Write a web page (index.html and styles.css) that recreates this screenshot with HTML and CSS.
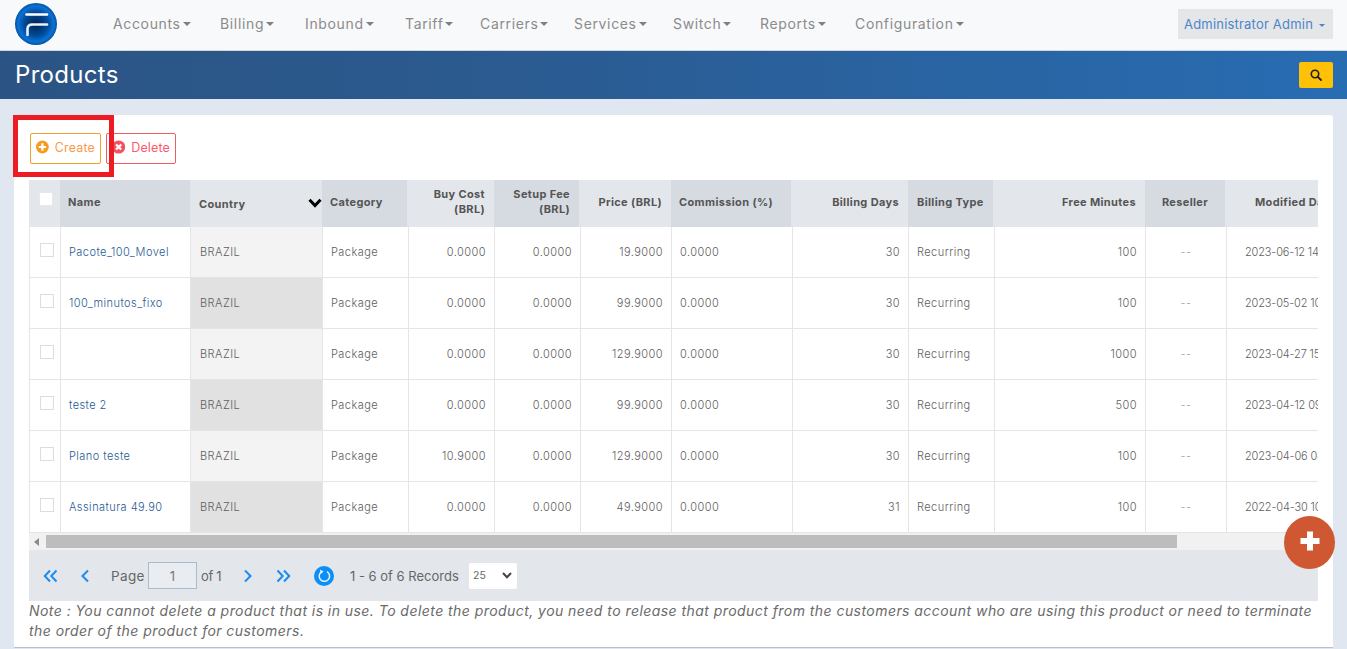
FILE: index.html
```
<!DOCTYPE html>
<html lang="en">
<head>
<meta charset="utf-8">
<title>Products</title>
<link rel="stylesheet" href="styles.css">
</head>
<body>
<header class="topbar">
  <a class="logo" href="#" aria-label="Home">
    <svg width="42" height="42" viewBox="0 0 42 42">
      <defs>
        <radialGradient id="lg" cx="50%" cy="50%" r="50%">
          <stop offset="0" stop-color="#00224f"/>
          <stop offset=".55" stop-color="#014a96"/>
          <stop offset=".85" stop-color="#0a72d6"/>
          <stop offset="1" stop-color="#02529f"/>
        </radialGradient>
      </defs>
      <circle cx="21" cy="21" r="21" fill="url(#lg)"/>
      <path d="M11.500 11.500H32" stroke="#fff" stroke-width="2.600" fill="none" stroke-linecap="round"/>
      <path d="M12.500 32V26C12.500 23 14.500 21.500 17.500 21.500H32" stroke="#e8f0f8" stroke-width="2.600" fill="none" stroke-linecap="round"/>
    </svg>
  </a>
  <nav class="mainnav">
    <a class="navitem" href="#">Accounts</a>
    <a class="navitem" href="#">Billing</a>
    <a class="navitem" href="#">Inbound</a>
    <a class="navitem" href="#">Tariff</a>
    <a class="navitem" href="#">Carriers</a>
    <a class="navitem" href="#">Services</a>
    <a class="navitem" href="#">Switch</a>
    <a class="navitem" href="#">Reports</a>
    <a class="navitem" href="#">Configuration</a>
  </nav>
  <button class="userbtn" type="button">Administrator Admin</button>
</header>

<section class="titlebar">
  <h1 class="pagetitle">Products</h1>
  <button class="searchbtn" type="button" aria-label="Search">
    <svg width="12" height="12" viewBox="0 0 12 12"><circle cx="5" cy="5" r="3.700" fill="none" stroke="#1c1c1c" stroke-width="1.600"/><path d="M7.800 7.800L11 11" stroke="#1c1c1c" stroke-width="1.800" stroke-linecap="round"/></svg>
  </button>
</section>

<main class="card">
  <div class="toolbar">
    <button class="actbtn create" type="button">
      <svg class="acticon" width="14" height="14" viewBox="0 0 14 14"><circle cx="7" cy="7" r="7" fill="#f39c1f"/><path d="M7 3V11M3 7H11" stroke="#fff" stroke-width="2.400"/></svg>Create
    </button>
    <button class="actbtn delete" type="button">
      <svg class="acticon" width="14" height="14" viewBox="0 0 14 14"><circle cx="7" cy="7" r="7" fill="#f4505f"/><path d="M4.300 4.300L9.700 9.700M9.700 4.300L4.300 9.700" stroke="#fff" stroke-width="2.400"/></svg>Delete
    </button>
    <div class="highlight"></div>
  </div>

  <div class="gridwrap">
    <div class="ghead">
      <div class="th"><span class="cb cb-head"></span></div>
      <div class="th dark">Name</div>
      <div class="th country">Country
        <svg class="sortarrow" width="14" height="10" viewBox="0 0 14 10"><path d="M1.500 1.800L7 7.500L12.500 1.800" fill="none" stroke="#000" stroke-width="3"/></svg>
      </div>
      <div class="th dark">Category</div>
      <div class="th right">Buy Cost<br>(BRL)</div>
      <div class="th dark right">Setup Fee<br>(BRL)</div>
      <div class="th right">Price (BRL)</div>
      <div class="th dark">Commission (%)</div>
      <div class="th right">Billing Days</div>
      <div class="th dark btype">Billing Type</div>
      <div class="th right">Free Minutes</div>
      <div class="th dark center">Reseller</div>
      <div class="th modified">Modified Date</div>
    </div>

    <div class="grow">
      <div class="td"><span class="cb"></span></div><div class="td"><a class="plink" href="#">Pacote_100_Movel</a></div><div class="td cty">BRAZIL</div><div class="td">Package</div><div class="td right">0.0000</div><div class="td right">0.0000</div><div class="td right">19.9000</div><div class="td">0.0000</div><div class="td right">30</div><div class="td">Recurring</div><div class="td right">100</div><div class="td center muted">--</div><div class="td date">2023-06-12 14:21:05</div>
    </div>
    <div class="grow">
      <div class="td"><span class="cb"></span></div><div class="td"><a class="plink" href="#">100_minutos_fixo</a></div><div class="td cty alt">BRAZIL</div><div class="td">Package</div><div class="td right">0.0000</div><div class="td right">0.0000</div><div class="td right">99.9000</div><div class="td">0.0000</div><div class="td right">30</div><div class="td">Recurring</div><div class="td right">100</div><div class="td center muted">--</div><div class="td date">2023-05-02 10:12:44</div>
    </div>
    <div class="grow">
      <div class="td"><span class="cb"></span></div><div class="td"></div><div class="td cty">BRAZIL</div><div class="td">Package</div><div class="td right">0.0000</div><div class="td right">0.0000</div><div class="td right">129.9000</div><div class="td">0.0000</div><div class="td right">30</div><div class="td">Recurring</div><div class="td right">1000</div><div class="td center muted">--</div><div class="td date">2023-04-27 15:33:18</div>
    </div>
    <div class="grow">
      <div class="td"><span class="cb"></span></div><div class="td"><a class="plink" href="#">teste 2</a></div><div class="td cty alt">BRAZIL</div><div class="td">Package</div><div class="td right">0.0000</div><div class="td right">0.0000</div><div class="td right">99.9000</div><div class="td">0.0000</div><div class="td right">30</div><div class="td">Recurring</div><div class="td right">500</div><div class="td center muted">--</div><div class="td date">2023-04-12 09:47:52</div>
    </div>
    <div class="grow">
      <div class="td"><span class="cb"></span></div><div class="td"><a class="plink" href="#">Plano teste</a></div><div class="td cty">BRAZIL</div><div class="td">Package</div><div class="td right">10.9000</div><div class="td right">0.0000</div><div class="td right">129.9000</div><div class="td">0.0000</div><div class="td right">30</div><div class="td">Recurring</div><div class="td right">100</div><div class="td center muted">--</div><div class="td date">2023-04-06 08:05:29</div>
    </div>
    <div class="grow">
      <div class="td"><span class="cb"></span></div><div class="td"><a class="plink" href="#">Assinatura 49.90</a></div><div class="td cty alt">BRAZIL</div><div class="td">Package</div><div class="td right">0.0000</div><div class="td right">0.0000</div><div class="td right">49.9000</div><div class="td">0.0000</div><div class="td right">31</div><div class="td">Recurring</div><div class="td right">100</div><div class="td center muted">--</div><div class="td date">2022-04-30 10:16:37</div>
    </div>

    <div class="hscroll">
      <span class="scrollarrow"></span>
      <span class="scrollthumb"></span>
    </div>
  </div>

  <div class="pager">
    <svg class="pg pg-first" width="15" height="14" viewBox="0 0 15 14"><path d="M7 1.500L1.800 7L7 12.500M13.500 1.500L8.300 7L13.500 12.500" fill="none" stroke="#1a8cf0" stroke-width="2"/></svg>
    <svg class="pg pg-prev" width="10" height="14" viewBox="0 0 10 14"><path d="M8 1.500L2.500 7L8 12.500" fill="none" stroke="#1a8cf0" stroke-width="2"/></svg>
    <span class="pgtext pg-page">Page</span>
    <input class="pginput" type="text" value="1" aria-label="Page">
    <span class="pgtext pg-of">of 1</span>
    <svg class="pg pg-next" width="10" height="14" viewBox="0 0 10 14"><path d="M2 1.500L7.500 7L2 12.500" fill="none" stroke="#1a8cf0" stroke-width="2"/></svg>
    <svg class="pg pg-last" width="15" height="14" viewBox="0 0 15 14"><path d="M1.500 1.500L6.700 7L1.500 12.500M8 1.500L13.200 7L8 12.500" fill="none" stroke="#1a8cf0" stroke-width="2"/></svg>
    <svg class="pg pg-refresh" width="20" height="20" viewBox="0 0 20 20"><circle cx="10" cy="10" r="10" fill="#0b8ef5"/><path d="M7.500 5.800A5.200 5.200 0 1 0 13 5.600" fill="none" stroke="#e4f3ff" stroke-width="1.500"/><path d="M6 3.500L9.600 5.400L6.700 8Z" fill="#e4f3ff"/></svg>
    <span class="pgtext pg-records">1 - 6 of 6 Records</span>
    <div class="pgselect">25
      <svg width="10" height="7" viewBox="0 0 10 7"><path d="M1 1L5 5.300L9 1" fill="none" stroke="#444" stroke-width="2"/></svg>
    </div>
  </div>

  <p class="note">Note : You cannot delete a product that is in use. To delete the product, you need to release that product from the customers account who are using this product or need to terminate<br>the order of the product for customers.</p>
</main>

<button class="fab" type="button" aria-label="Add">
  <svg width="20" height="20" viewBox="0 0 20 20"><path d="M10 .500V19.500M.500 10H19.500" stroke="#fff" stroke-width="6"/></svg>
</button>
</body>
</html>
```
FILE: styles.css
```
* { box-sizing: border-box; }
html, body { height: 649px; overflow: hidden; }
body {
  margin: 0;
  background: #e0e7f1;
  font-family: Inter, "Open Sans", "Liberation Sans", sans-serif;
  color: #666;
  position: relative;
}
a { text-decoration: none; }
button { font-family: inherit; cursor: pointer; }

/* Top navigation */
.topbar {
  height: 51px;
  background: #f8f9fb;
  border-bottom: 1px solid #d3d6da;
  display: flex;
  align-items: flex-start;
  padding: 3px 14px 0 15px;
}
.logo { width: 42px; height: 42px; display: block; }
.mainnav {
  margin-left: 56px;
  padding-top: 12px;
  display: grid;
  grid-template-columns: 107px 85px 100px 75px 94px 99px 87px 95px auto;
}
.navitem {
  font-size: 14px;
  line-height: 17px;
  color: #8b8b8b;
  letter-spacing: .65px;
  white-space: nowrap;
}
.navitem::after {
  content: "";
  display: inline-block;
  margin-left: 2px;
  vertical-align: 3px;
  border-top: 4.500px solid #808080;
  border-left: 4.500px solid transparent;
  border-right: 4.500px solid transparent;
}
.userbtn {
  margin: 6px 0 0 auto;
  width: 155px;
  height: 30px;
  border: 0;
  background: #e5e6e8;
  color: #4b85c9;
  font-size: 13px;
  letter-spacing: .2px;
  padding: 0 0 0 6px;
  text-align: left;
  white-space: nowrap;
}
.userbtn::after {
  content: "";
  display: inline-block;
  margin-left: 6px;
  vertical-align: 2px;
  border-top: 3.500px solid #4b85c9;
  border-left: 3.500px solid transparent;
  border-right: 3.500px solid transparent;
}

/* Title band */
.titlebar {
  height: 48px;
  background: linear-gradient(90deg, #2b5484 0%, #2b5a8f 35%, #286cb2 100%);
  display: flex;
  align-items: center;
  justify-content: space-between;
  padding: 0 14px 0 15px;
}
.pagetitle {
  margin: 0;
  font-size: 24px;
  line-height: 30px;
  font-weight: 400;
  color: #fff;
  letter-spacing: .3px;
}
.searchbtn {
  width: 34px;
  height: 26px;
  border: 0;
  border-radius: 2px;
  background: #ffc107;
  display: flex;
  align-items: center;
  justify-content: center;
  padding: 0;
}

/* Card */
.card {
  margin: 16px 14px 0;
  height: 533px;
  border-bottom: 1px solid #b9c0c8;
  background: #fff;
  border-radius: 3px 3px 0 0;
  padding: 18px 15px 0;
}
.toolbar {
  height: 47px;
  display: flex;
  align-items: flex-start;
  gap: 5px;
  position: relative;
  padding-left: 1px;
}
.actbtn {
  height: 31px;
  background: #fff;
  border-radius: 2px;
  font-size: 12.500px;
  letter-spacing: .15px;
  line-height: 14px;
  display: flex;
  align-items: center;
  gap: 6px;
  padding: 0 5px 1px;
}
.acticon { position: relative; top: -1px; }
.create { width: 71px; border: 1px solid #f0a02c; color: #fb9a4e; }
.delete { width: 70px; border: 1px solid #ee5f63; color: #fb5a6c; }
.highlight {
  position: absolute;
  left: -16px;
  top: -18px;
  width: 101px;
  height: 62px;
  border: 5px solid #ed1c24;
}

/* Grid */
.gridwrap { width: 1289px; overflow: hidden; }
.ghead, .grow { display: grid; width: 1420px; }
.ghead {
  height: 47px;
  grid-template-columns: 31px 130px 132px 85px 87px 85px 92px 120px 117px 85px 152px 80px 224px;
}
.grow {
  height: 51px;
  grid-template-columns: 31px 130px 132px 86px 86px 86px 91px 121px 116px 86px 151px 81px 222px;
  border-left: 1px solid #e5e5e5;
  border-bottom: 1px solid #e5e5e5;
}
.th {
  background: #e3e6eb;
  font-size: 11px;
  font-weight: 700;
  line-height: 15px;
  color: #555;
  letter-spacing: .36px;
  padding: 0 8px 3px;
  display: flex;
  flex-direction: column;
  justify-content: center;
  white-space: nowrap;
  position: relative;
}
.th.dark { background: #d6dbe2; }
.th.right { text-align: right; padding-right: 9px; }
.th.center { text-align: center; }
.th.btype { padding-left: 9px; }
.th.country { padding: 2px 0 0 9px; }
.th.modified { padding-left: 30px; }
.sortarrow { position: absolute; left: 118px; top: 18px; }
.td {
  font-size: 11px;
  font-weight: 300;
  line-height: 14px;
  color: #5e5e5e;
  letter-spacing: .45px;
  padding: 0 8px;
  display: flex;
  align-items: center;
  border-right: 1px solid #e5e5e5;
  white-space: nowrap;
}
.td.right { justify-content: flex-end; padding-right: 8px; }
.td.center { justify-content: center; }
.td.muted { color: #999; }
.td.date { border-right: 0; padding-left: 18px; letter-spacing: -.15px; }
.td.cty { background: #f3f3f3; padding-left: 9px; }
.td.cty.alt { background: #e1e1e1; }
.plink { color: #1f5a94; }
.cb {
  display: block;
  width: 14px;
  height: 14px;
  background: #fff;
  border: 1px solid #ddd;
  position: relative;
  top: -2px;
  left: 2px;
}
.cb-head { left: 2px; top: -3px; border-color: #e8e8e8; }

/* Fake horizontal scrollbar */
.hscroll {
  height: 17px;
  background: #f1f1f1;
  display: flex;
  align-items: center;
  padding-left: 5px;
}
.scrollarrow {
  border-right: 5px solid #8a8a8a;
  border-top: 4px solid transparent;
  border-bottom: 4px solid transparent;
}
.scrollthumb {
  display: block;
  margin-left: 7px;
  width: 1131px;
  height: 13px;
  background: #bdbdbd;
}

/* Pager */
.pager {
  width: 1289px;
  height: 51px;
  background: #e3e6eb;
  display: flex;
  align-items: center;
}
.pg, .pgtext, .pginput, .pgselect { flex: none; }
.pgtext { font-size: 13.500px; letter-spacing: .35px; color: #666; white-space: nowrap; }
.pg-first { margin-left: 14px; }
.pg-prev { margin-left: 22px; }
.pg-page { margin-left: 21px; width: 37px; }
.pginput {
  width: 49px;
  height: 27px;
  background: #e9edf1;
  border: 1px solid #a9bccb;
  color: #777;
  font: 13px Inter, sans-serif;
  text-align: center;
  padding: 0;
}
.pg-of { margin-left: 4px; width: 42px; font-size: 13px; letter-spacing: -.3px; }
.pg-next { margin-left: 0; }
.pg-last { margin-left: 23px; }
.pg-refresh { margin-left: 23px; }
.pg-records { margin-left: 16px; width: 119px; font-size: 13px; letter-spacing: 0; }
.pgselect {
  width: 48px;
  height: 26px;
  background: #fff;
  border-radius: 2px;
  font-size: 10.500px;
  color: #666;
  display: flex;
  align-items: center;
  justify-content: space-between;
  padding: 0 5px 0 4px;
}

.note {
  margin: 0;
  width: 1289px;
  font-size: 14px;
  line-height: 20px;
  font-style: italic;
  color: #6a6a6a;
  letter-spacing: .445px;
  white-space: nowrap;
}

/* Floating add button */
.fab {
  position: absolute;
  left: 1284px;
  top: 516px;
  width: 51px;
  height: 53px;
  border: 0;
  border-radius: 50%;
  background: #cf5833;
  display: flex;
  align-items: center;
  justify-content: center;
  padding: 0 0 3px;
}
```
